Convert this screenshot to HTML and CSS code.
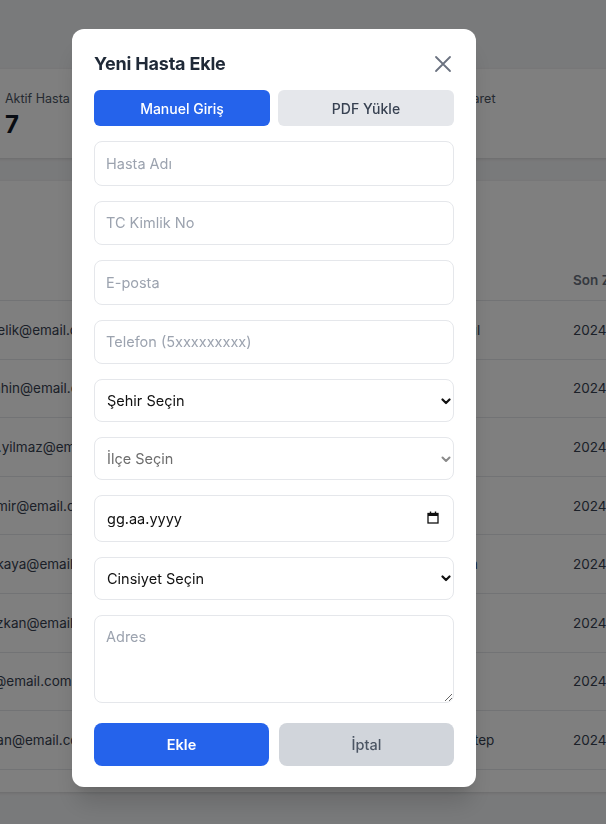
FILE: index.html
```html
<!DOCTYPE html>
<html lang="tr">
<head>
<meta charset="utf-8">
<title>Hastalar</title>
<link rel="stylesheet" href="styles.css">
</head>
<body>
<div class="page">
  <div class="stats">
    <div class="stat"><div class="stat-label">Aktif Hasta</div><div class="stat-value">7</div></div>
    <div class="stat"></div>
    <div class="stat"><div class="stat-label">Toplam Ziyaret</div></div>
  </div>

  <div class="table-card">
    <div class="table-head-area"></div>
    <div class="trow thead">
      <span></span><span></span><span></span><span>Son Ziyaret</span>
    </div>
    <div class="trow"><span>ahmet.celik@email.com</span><span></span><span>İstanbul</span><span>2024-01-15</span></div>
    <div class="trow"><span>fatma.sahin@email.com</span><span></span><span></span><span>2024-01-14</span></div>
    <div class="trow"><span>mehmet.yilmaz@email.com</span><span></span><span></span><span>2024-01-13</span></div>
    <div class="trow"><span>ayse.demir@email.com</span><span></span><span></span><span>2024-01-12</span></div>
    <div class="trow"><span>zeynep.kaya@email.com</span><span></span><span>Antalya</span><span>2024-01-11</span></div>
    <div class="trow"><span>hasan.ozkan@email.com</span><span></span><span></span><span>2024-01-10</span></div>
    <div class="trow"><span>ibrahim@email.com</span><span></span><span></span><span>2024-01-09</span></div>
    <div class="trow"><span>can.arslan@email.com</span><span></span><span>Gaziantep</span><span>2024-01-08</span></div>
  </div>
</div>

<div class="overlay">
  <div class="modal">
    <div class="modal-header">
      <h2 class="modal-title">Yeni Hasta Ekle</h2>
      <button class="close-btn" type="button" aria-label="Kapat">
        <svg width="24" height="24" viewBox="0 0 24 24" fill="none" stroke="#6b7280" stroke-width="1.8" stroke-linecap="round"><path d="M5 5l14 14M19 5L5 19"/></svg>
      </button>
    </div>
    <div class="tabs">
      <button class="tab tab-active" type="button">Manuel Giriş</button>
      <button class="tab" type="button">PDF Yükle</button>
    </div>
    <form class="form">
      <input class="field" type="text" placeholder="Hasta Adı">
      <input class="field" type="text" placeholder="TC Kimlik No">
      <input class="field" type="email" placeholder="E-posta">
      <input class="field" type="tel" placeholder="Telefon (5xxxxxxxxx)">
      <div class="select-wrap">
        <select class="field select"><option>Şehir Seçin</option></select>
        <svg class="chev" width="10" height="7" viewBox="0 0 10 7" fill="none" stroke="#111" stroke-width="2.2" stroke-linecap="round" stroke-linejoin="round"><path d="M1.5 1.5L5 5l3.5-3.5"/></svg>
      </div>
      <div class="select-wrap">
        <select class="field select" disabled><option>İlçe Seçin</option></select>
        <svg class="chev" width="10" height="7" viewBox="0 0 10 7" fill="none" stroke="#8a8a8a" stroke-width="2" stroke-linecap="round" stroke-linejoin="round"><path d="M1.5 1.5L5 5l3.5-3.5"/></svg>
      </div>
      <div class="select-wrap">
        <input class="field date" type="text" value="gg.aa.yyyy" readonly>
        <svg class="cal" width="12" height="13" viewBox="0 0 12 13" fill="none"><rect x="1" y="2.5" width="10" height="9.5" stroke="#111" stroke-width="1.3"/><rect x="1" y="2.5" width="10" height="2.5" fill="#111"/><rect x="2.8" y="0.5" width="1.4" height="2.5" fill="#111"/><rect x="7.8" y="0.5" width="1.4" height="2.5" fill="#111"/></svg>
      </div>
      <div class="select-wrap">
        <select class="field select"><option>Cinsiyet Seçin</option></select>
        <svg class="chev" width="10" height="7" viewBox="0 0 10 7" fill="none" stroke="#111" stroke-width="2.2" stroke-linecap="round" stroke-linejoin="round"><path d="M1.5 1.5L5 5l3.5-3.5"/></svg>
      </div>
      <textarea class="field area" placeholder="Adres"></textarea>
    </form>
    <div class="actions">
      <button class="btn btn-primary" type="button">Ekle</button>
      <button class="btn btn-cancel" type="button">İptal</button>
    </div>
  </div>
</div>
</body>
</html>
```

FILE: styles.css
```css
* { box-sizing: border-box; }
html, body { margin: 0; padding: 0; }
body {
  width: 606px;
  height: 824px;
  overflow: hidden;
  background: #f3f4f6;
  font-family: "Inter", "Liberation Sans", sans-serif;
  color: #111827;
}

/* background page (scrolled horizontally) */
.page {
  width: 900px;
  margin-left: -150px;
  padding-top: 69px;
}
.stats {
  display: grid;
  grid-template-columns: 171px 184px 358px;
  gap: 24px;
  padding-left: 139px;
}
.stat {
  background: #fff;
  height: 89px;
  padding: 20px 16px 17px;
  box-shadow: 0 1px 3px rgba(0,0,0,0.12);
}
.stat-label { font-size: 12.5px; line-height: 20px; color: #4b5563; white-space: nowrap; }
.stat-value { font-size: 24px; line-height: 32px; font-weight: 700; color: #111827; }

.table-card {
  margin-top: 23px;
  background: #fff;
  height: 611px;
  box-shadow: 0 1px 3px rgba(0,0,0,0.12);
}
.table-head-area { height: 78px; }
.trow {
  display: grid;
  grid-template-columns: 204px 280px 143px 1fr;
  padding-left: 96px;
  align-items: center;
  height: 58.6px;
  border-bottom: 1px solid #e5e7eb;
  font-size: 13.5px;
  color: #374151;
  white-space: nowrap;
}
.trow span { overflow: hidden; }
.thead {
  height: 42px;
  font-weight: 600;
  color: #6b7280;
}

/* overlay & modal */
.overlay {
  position: fixed;
  inset: 0;
  background: rgba(0,0,0,0.5);
  display: flex;
  align-items: flex-start;
}
.modal {
  margin: 29px 0 0 72px;
  width: 404px;
  background: #fff;
  border-radius: 12px;
  padding: 21px 22px 21px;
  box-shadow: 0 20px 25px -5px rgba(0,0,0,0.15), 0 8px 10px -6px rgba(0,0,0,0.1);
}
.modal-header {
  display: flex;
  align-items: center;
  justify-content: space-between;
  height: 28px;
  margin-bottom: 12px;
}
.modal-title {
  margin: 0;
  font-size: 18px;
  line-height: 28px;
  font-weight: 700;
  color: #1f2937;
  letter-spacing: -0.2px;
}
.close-btn {
  border: 0;
  background: none;
  padding: 0;
  width: 24px;
  height: 24px;
  margin-right: -1px;
  display: flex;
}
.tabs {
  display: flex;
  gap: 8px;
  margin-bottom: 15px;
}
.tab {
  flex: 1;
  height: 36px;
  border: 0;
  border-radius: 6px;
  background: #e5e7eb;
  color: #374151;
  font-family: inherit;
  font-size: 14px;
  font-weight: 500;
}
.tab-active { background: #2563eb; color: #fff; }

.form {
  display: flex;
  flex-direction: column;
  gap: 15px;
  margin: 0;
}
.field {
  display: block;
  width: 100%;
  height: 44.5px;
  border: 1px solid #e5e7eb;
  border-radius: 8px;
  padding: 0 11px;
  font-family: inherit;
  font-size: 14.5px;
  color: #111;
  background: #fff;
  outline: none;
}
.field::placeholder { color: #9ca3af; }
.select-wrap { position: relative; }
.select {
  appearance: none;
  -webkit-appearance: none;
  height: 43px;
  padding-left: 12px;
}
.select:disabled { color: #6d6d6d; opacity: 1; background: #fff; }
.date { height: 46.5px; padding-left: 12px; }
.chev {
  position: absolute;
  right: 3px;
  top: 50%;
  margin-top: -3px;
  pointer-events: none;
}
.cal {
  position: absolute;
  right: 15px;
  top: 50%;
  margin-top: -7px;
  pointer-events: none;
}
.area {
  height: 88.5px;
  padding: 12px 11px;
  resize: vertical;
}
.actions {
  display: flex;
  gap: 10px;
  margin-top: 20px;
}
.btn {
  flex: 1;
  height: 43px;
  border: 0;
  border-radius: 8px;
  font-family: inherit;
  font-size: 14.5px;
}
.btn-primary { background: #2563eb; color: #fff; font-weight: 600; }
.btn-cancel { background: #d1d5db; color: #4b5563; font-weight: 500; }
```
